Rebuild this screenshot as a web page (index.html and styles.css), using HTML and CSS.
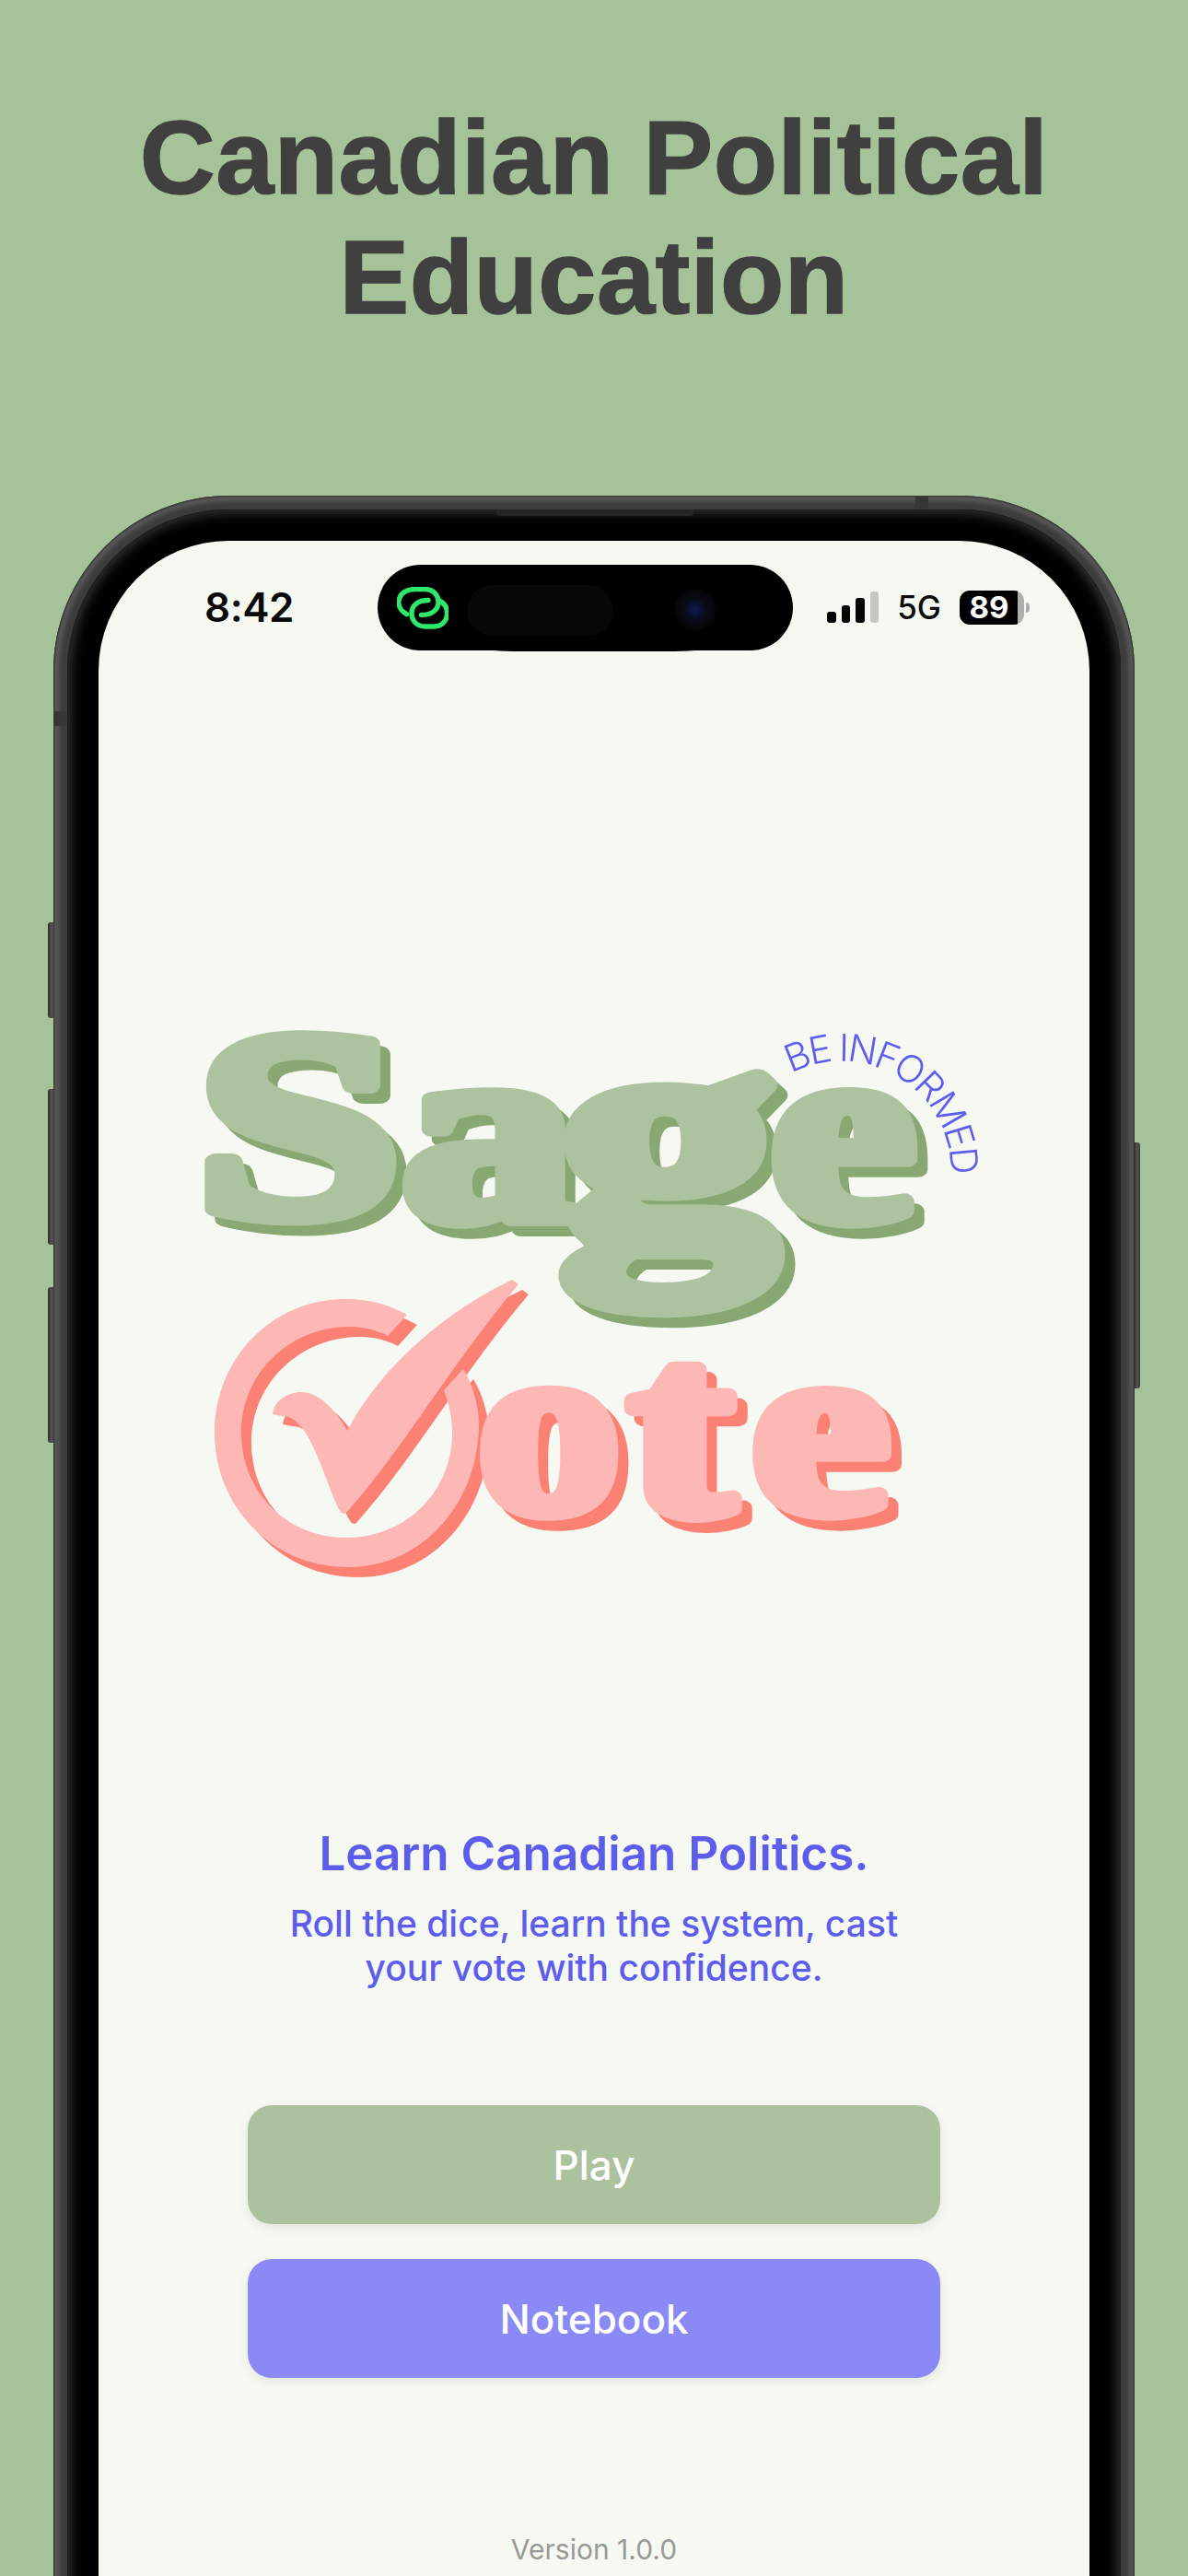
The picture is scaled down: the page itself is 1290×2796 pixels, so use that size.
FILE: index.html
```html
<!DOCTYPE html>
<html lang="en">
<head>
<meta charset="utf-8">
<title>Sage Vote</title>
<link rel="stylesheet" href="styles.css">
</head>
<body>
<main class="stage">
  <h1 class="headline">Canadian Political<br>Education</h1>
  <div class="phone">
    <span class="side side-a"></span>
    <span class="side side-b"></span>
    <span class="side side-c"></span>
    <span class="side side-r"></span>
    <span class="speaker"></span>
    <span class="band band-top"></span>
    <span class="band band-left"></span>
    <div class="bezel">
      <div class="screen">
        <div class="island">
          <svg class="link-icon" viewBox="431 637 56 46" width="56" height="46" fill="none" stroke="#2de86a" stroke-width="5.4" stroke-linecap="round">
            <path d="M441.7 666.7C434.5 662.5 431.5 656 433.5 650C435.5 643 442.5 639.5 451 639.5L461 639.5C470 639.5 476 645.5 476 653.5C476 661.5 469.5 667.5 457.5 667.5"/>
            <path d="M476.5 651.5C482.5 654.5 485.5 660 485.5 665.5C485.5 674 479.5 680 471.5 680L461.5 680C452.5 680 447 673.5 447 665.5C447 657 454 651.5 465 651.5"/>
          </svg>
          <span class="island-pill"></span>
          <span class="camera"></span>
        </div>
        <div class="status">
          <span class="time">8:42</span>
          <div class="status-right">
            <div class="signal">
              <span class="bar bar-1"></span>
              <span class="bar bar-2"></span>
              <span class="bar bar-3"></span>
              <span class="bar bar-4"></span>
            </div>
            <span class="network">5G</span>
            <div class="battery"><span class="battery-level">89</span><span class="battery-nub"></span></div>
          </div>
        </div>
        <svg class="logo" viewBox="107 1080 1076 660" width="1076" height="660" role="img" aria-label="Sage Vote, be informed">
          <g class="logo-sage">
            <text class="glyph" transform="matrix(4.7 0 0 3.4 608 1345)">g</text>
            <text class="glyph" transform="matrix(4 0 0 2.9 213 1319)">S</text>
            <text class="glyph" transform="matrix(3.79 0 0 2.85 436 1322.5)">a</text>
            <text class="glyph" transform="matrix(3.58 0 0 2.85 836 1322.5)">e</text>
          </g>
          <g class="logo-vote">
            <path d="M442 1427C420 1415 400 1410 375 1410C295 1410 233 1475 233 1555C233 1635 295 1701 378 1701C460 1701 520 1630 520 1545C520 1525 512 1500 503 1486L482 1509C488 1525 491 1540 491 1555C491 1620 440 1669 376 1669C312 1669 262 1620 262 1555C262 1490 315 1440 380 1440C395 1440 410 1444 421 1450Z"/>
            <path d="M296 1535C298 1520 312 1511 327 1511C348 1511 368 1535 377 1553C415 1480 490 1420 556 1389L563 1394C490 1480 440 1570 376 1642Q372 1645 368 1638C350 1600 335 1535 306 1537Z"/>
            <text class="glyph" transform="matrix(3.11 0 0 2.72 518.5 1640)">o</text>
            <text class="glyph" transform="matrix(3.44 0 0 2.77 682.4 1642)">t</text>
            <text class="glyph" transform="matrix(3.4 0 0 2.72 815.7 1640)">e</text>
          </g>
          <path id="arc" class="arc" d="M859 1165A119 119 0 0 1 1024 1315"/>
          <text class="arc-text"><textPath href="#arc">BE INFORMED</textPath></text>
        </svg>
        <section class="intro">
          <h2 class="intro-title">Learn Canadian Politics.</h2>
          <p class="intro-text">Roll the dice, learn the system, cast<br>your vote with confidence.</p>
        </section>
        <div class="actions">
          <button class="btn btn-play" type="button">Play</button>
          <button class="btn btn-notebook" type="button">Notebook</button>
        </div>
        <p class="version">Version 1.0.0</p>
      </div>
    </div>
  </div>
</main>
</body>
</html>
```

FILE: styles.css
```css
* { box-sizing: border-box; }
html, body { margin: 0; padding: 0; }
body {
  width: 1290px;
  height: 2796px;
  overflow: hidden;
  background: #a6c298;
  font-family: "Inter", "Liberation Sans", sans-serif;
}
.stage {
  display: flex;
  flex-direction: column;
  align-items: flex-start;
  height: 2796px;
  overflow: hidden;
}
.headline {
  width: 1290px;
  margin: 106px 0 0;
  font-family: "Liberation Sans", Arial, sans-serif;
  font-weight: 700;
  font-size: 113.5px;
  line-height: 130px;
  text-align: center;
  color: #404040;
  -webkit-text-stroke: 1.5px #404040;
  letter-spacing: 0.5px;
}
.phone {
  position: relative;
  flex: none;
  width: 1174px;
  height: 2400px;
  margin: 172px 0 0 58px;
  padding: 15px;
  border-radius: 190px 190px 0 0;
  background: #3c3c3c;
  box-shadow: inset 0 0 2px 1px #2e2e2e, inset 0 0 5px 6px #5a5a5a;
}
.bezel {
  height: 100%;
  padding: 34px 34px 0;
  border-radius: 175px 175px 0 0;
  background: #000;
  box-shadow: inset 0 0 0 1px #1e1e1e, inset 0 0 14px 3px #3c3c3c;
}
.screen {
  position: relative;
  display: flex;
  flex-direction: column;
  align-items: center;
  height: 100%;
  border-radius: 141px 141px 0 0;
  background: #f6f9f2;
}
.side {
  position: absolute;
  width: 7px;
  background: linear-gradient(90deg, #2c2c2c, #555 55%, #3a3a3a);
}
.side-a, .side-b, .side-c { left: -6px; border-radius: 3px 0 0 3px; }
.side-a { top: 463px; height: 104px; }
.side-b { top: 644px; height: 169px; }
.side-c { top: 859px; height: 169px; }
.side-r { right: -6px; top: 702px; height: 267px; border-radius: 0 3px 3px 0; }
.speaker {
  position: absolute;
  left: 481px;
  top: 15px;
  width: 214px;
  height: 7px;
  border-radius: 0 0 4px 4px;
  background: #262626;
  z-index: 1;
}
.band { position: absolute; background: #363636; }
.band-top { left: 936px; top: 0; width: 14px; height: 15px; }
.band-left { left: 0; top: 234px; width: 15px; height: 16px; }
.island {
  position: absolute;
  left: 303px;
  top: 26px;
  width: 451px;
  height: 93px;
  border-radius: 47px;
  background: #000;
}
.island::after {
  content: "";
  position: absolute;
  left: 108px;
  bottom: -1px;
  width: 255px;
  height: 12px;
  border-radius: 0 0 40px 40px / 0 0 6px 6px;
  background: #000;
}
.link-icon { position: absolute; left: 21px; top: 24px; z-index: 1; }
.island-pill {
  position: absolute;
  left: 97px;
  top: 22px;
  width: 159px;
  height: 55px;
  border-radius: 28px;
  background: #070707;
  z-index: 1;
}
.camera {
  position: absolute;
  left: 322px;
  top: 26px;
  width: 46px;
  height: 46px;
  border-radius: 50%;
  background: radial-gradient(circle, #0f1c52 0, #0b1230 20%, #090912 42%, #050507 70%, #000 100%);
  z-index: 1;
}
.status {
  display: flex;
  flex: none;
  justify-content: space-between;
  align-items: center;
  width: 100%;
  height: 144px;
  padding: 0 71px 0 115px;
}
.time {
  font-size: 44px;
  font-weight: 600;
  line-height: 54px;
  letter-spacing: -0.5px;
  color: #0b0b0b;
}
.status-right {
  display: flex;
  align-items: center;
  gap: 20px;
}
.signal {
  display: flex;
  align-items: flex-end;
  gap: 6px;
  height: 34px;
}
.bar {
  width: 9.5px;
  border-radius: 3px;
  background: #050505;
}
.bar-1 { height: 12px; }
.bar-2 { height: 19px; }
.bar-3 { height: 27px; }
.bar-4 { height: 34px; background: #c5c8c2; }
.network {
  font-family: "Inter", sans-serif;
  font-size: 35px;
  font-weight: 500;
  line-height: 40px;
  color: #0b0b0b;
}
.battery {
  position: relative;
  display: flex;
  justify-content: flex-start;
  align-items: center;
  width: 70px;
  height: 37px;
  border-radius: 11px;
  background: linear-gradient(90deg, #000 63px, #aeb0ab 63px);
}
.battery-level {
  width: 68px;
  text-align: center;
  padding-right: 4px;
  font-size: 33px;
  font-weight: 700;
  line-height: 37px;
  color: #fff;
}
.battery-nub {
  position: absolute;
  left: 72px;
  top: 13px;
  width: 4px;
  height: 11px;
  border-radius: 0 4px 4px 0;
  background: #aeb0ab;
}
.logo {
  display: block;
  flex: none;
  margin-top: 349px;
  overflow: visible;
}
.glyph {
  font-family: "Liberation Serif", serif;
  font-weight: 700;
  font-size: 100px;
  stroke-width: 6px;
  stroke-linejoin: round;
}
.logo-sage { fill: #adc29e; stroke: #adc29e; filter: drop-shadow(11px 11px 0 #88a773); }
.logo-vote { fill: #fdb8b6; filter: drop-shadow(11px 11px 0 #fc8175); }
.logo-vote .glyph { stroke: #fdb8b6; }
.arc { fill: none; stroke: none; }
.arc-text {
  font-family: "Inter", sans-serif;
  font-size: 41px;
  font-weight: 350;
  letter-spacing: -2.8px;
  fill: #5f5cf0;
}
.intro {
  flex: none;
  margin-top: 241px;
  text-align: center;
  color: #5e5ced;
}
.intro-title {
  margin: 0;
  font-size: 51.2px;
  font-weight: 600;
  line-height: 60px;
}
.intro-text {
  margin: 23px 0 0;
  font-size: 39px;
  font-weight: 500;
  line-height: 48px;
}
.actions {
  display: flex;
  flex: none;
  flex-direction: column;
  gap: 38px;
  width: 752px;
  margin-top: 125px;
}
.btn {
  height: 129px;
  border: 0;
  border-radius: 26px;
  font-family: "Inter", sans-serif;
  font-size: 44px;
  font-weight: 500;
  color: #fff;
  box-shadow: 0 4px 12px rgba(0, 0, 0, 0.08);
}
.btn-play { background: #acc19d; }
.btn-notebook { background: #8b89f6; }
.version {
  flex: none;
  margin: 168px 0 0;
  font-size: 30px;
  line-height: 36px;
  color: #999;
}
```
